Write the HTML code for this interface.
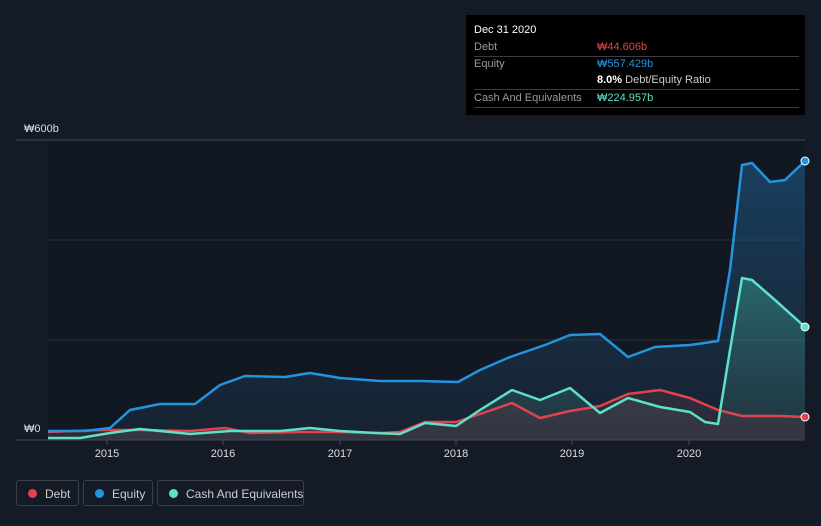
<!DOCTYPE html>
<html><head><meta charset="utf-8"><style>
body{margin:0;width:821px;height:526px;background:#151b26;font-family:"Liberation Sans","Noto Sans CJK KR",sans-serif;overflow:hidden;position:relative}
.tt{position:absolute;left:466px;top:15px;width:339px;height:100px;background:#000;color:#fff;font-size:11px}
.tt .r{position:absolute;left:8px;right:6px;border-bottom:1px solid #3a3d42;height:17px;line-height:17px;color:#999}
.lg{position:absolute;top:480px;height:26px;border:1px solid #3a404a;border-radius:3px;color:#ccc;font-size:12px;line-height:26px;box-sizing:border-box;white-space:nowrap}
.lg i{position:absolute;left:11px;top:8px;width:9px;height:9px;border-radius:50%}
</style></head><body>
<svg width="821" height="526" style="position:absolute;left:0;top:0">
<defs>
<linearGradient id="ge" x1="0" y1="0" x2="0" y2="1"><stop offset="0" stop-color="#1e5a8a" stop-opacity=".6"/><stop offset="1" stop-color="#1e3a55" stop-opacity=".3"/></linearGradient>
<linearGradient id="gc" x1="0" y1="0" x2="0" y2="1"><stop offset="0" stop-color="#3aa99a" stop-opacity=".45"/><stop offset="1" stop-color="#3a5a60" stop-opacity=".3"/></linearGradient>
</defs>
<rect x="48" y="140" width="757" height="300" fill="#121821"/>
<line x1="16" y1="140" x2="805" y2="140" stroke="#444a52"/>
<line x1="48" y1="240" x2="805" y2="240" stroke="#2e343d"/>
<line x1="48" y1="340" x2="805" y2="340" stroke="#2e343d"/>
<line x1="16" y1="440" x2="805" y2="440" stroke="#444a52"/>
<g stroke="#444a52"><line x1="107" y1="440" x2="107" y2="445"/><line x1="223" y1="440" x2="223" y2="445"/><line x1="340" y1="440" x2="340" y2="445"/><line x1="456" y1="440" x2="456" y2="445"/><line x1="572" y1="440" x2="572" y2="445"/><line x1="689" y1="440" x2="689" y2="445"/></g>
<g fill="#ddd" font-size="11" text-anchor="middle"><text x="107" y="457">2015</text><text x="223" y="457">2016</text><text x="340" y="457">2017</text><text x="456" y="457">2018</text><text x="572" y="457">2019</text><text x="689" y="457">2020</text></g>
<text x="24" y="132" fill="#ddd" font-size="11">₩600b</text>
<text x="24" y="432" fill="#ddd" font-size="11">₩0</text>
<path d="M48,431 L85,431 L110,428 L130,410 L160,404 L195,404 L220,385 L245,376 L285,377 L310,373 L340,378 L380,381 L420,381 L458,382 L480,370 L510,357 L545,345 L570,335 L600,334 L628,357 L655,347 L690,345 L718,341 L730,270 L742,165 L752,163 L770,182 L785,180 L805,161 L805,440 L48,440Z" fill="url(#ge)"/>
<path d="M48,438 L80,438 L110,433 L140,429 L190,434 L230,431 L280,431 L310,428 L340,431 L375,433 L400,434 L425,423 L456,426 L480,410 L512,390 L540,400 L570,388 L600,413 L628,398 L660,407 L690,412 L705,422 L718,424 L730,350 L742,278 L752,280 L775,300 L805,327 L805,440 L48,440Z" fill="url(#gc)"/>
<path d="M48,432 L100,430 L140,430 L190,431 L225,428 L250,433 L300,432 L340,432 L380,433 L400,432 L425,422 L456,422 L480,414 L512,403 L540,418 L570,411 L600,406 L628,394 L660,390 L690,398 L718,410 L742,416 L780,416 L805,417 L805,440 L48,440Z" fill="#5a3a45" fill-opacity=".35"/>
<path d="M48,432 L100,430 L140,430 L190,431 L225,428 L250,433 L300,432 L340,432 L380,433 L400,432 L425,422 L456,422 L480,414 L512,403 L540,418 L570,411 L600,406 L628,394 L660,390 L690,398 L718,410 L742,416 L780,416 L805,417" fill="none" stroke="#e0434d" stroke-width="2.5" stroke-linejoin="round"/>
<path d="M48,431 L85,431 L110,428 L130,410 L160,404 L195,404 L220,385 L245,376 L285,377 L310,373 L340,378 L380,381 L420,381 L458,382 L480,370 L510,357 L545,345 L570,335 L600,334 L628,357 L655,347 L690,345 L718,341 L730,270 L742,165 L752,163 L770,182 L785,180 L805,161" fill="none" stroke="#2394e0" stroke-width="2.5" stroke-linejoin="round"/>
<path d="M48,438 L80,438 L110,433 L140,429 L190,434 L230,431 L280,431 L310,428 L340,431 L375,433 L400,434 L425,423 L456,426 L480,410 L512,390 L540,400 L570,388 L600,413 L628,398 L660,407 L690,412 L705,422 L718,424 L730,350 L742,278 L752,280 L775,300 L805,327" fill="none" stroke="#5fe0c8" stroke-width="2.5" stroke-linejoin="round"/>
<circle cx="805" cy="161" r="4" fill="#2394e0" stroke="#fff" stroke-width="1"/>
<circle cx="805" cy="327" r="4" fill="#5fe0c8" stroke="#fff" stroke-width="1"/>
<circle cx="805" cy="417" r="4" fill="#e0434d" stroke="#fff" stroke-width="1"/>
</svg>
<div class="tt">
<div style="position:absolute;left:8px;top:9px;color:#fff">Dec 31 2020</div>
<div class="r" style="top:24px">Debt<span style="position:absolute;left:123px;color:#e0434d">₩44.606b</span></div>
<div class="r" style="top:41px;border:none">Equity<span style="position:absolute;left:123px;color:#2394e0">₩557.429b</span></div>
<div class="r" style="top:57px">&nbsp;<span style="position:absolute;left:123px;color:#ccc"><b style="color:#fff">8.0%</b> Debt/Equity Ratio</span></div>
<div class="r" style="top:75px">Cash And Equivalents<span style="position:absolute;left:123px;color:#5fe0c8">₩224.957b</span></div>
</div>
<div class="lg" style="left:16px;width:63px"><i style="background:#e0434d"></i><span style="position:absolute;left:28px">Debt</span></div>
<div class="lg" style="left:83px;width:70px"><i style="background:#2394e0"></i><span style="position:absolute;left:28px">Equity</span></div>
<div class="lg" style="left:157px;width:147px"><i style="background:#5fe0c8"></i><span style="position:absolute;left:28px">Cash And Equivalents</span></div>
</body></html>
